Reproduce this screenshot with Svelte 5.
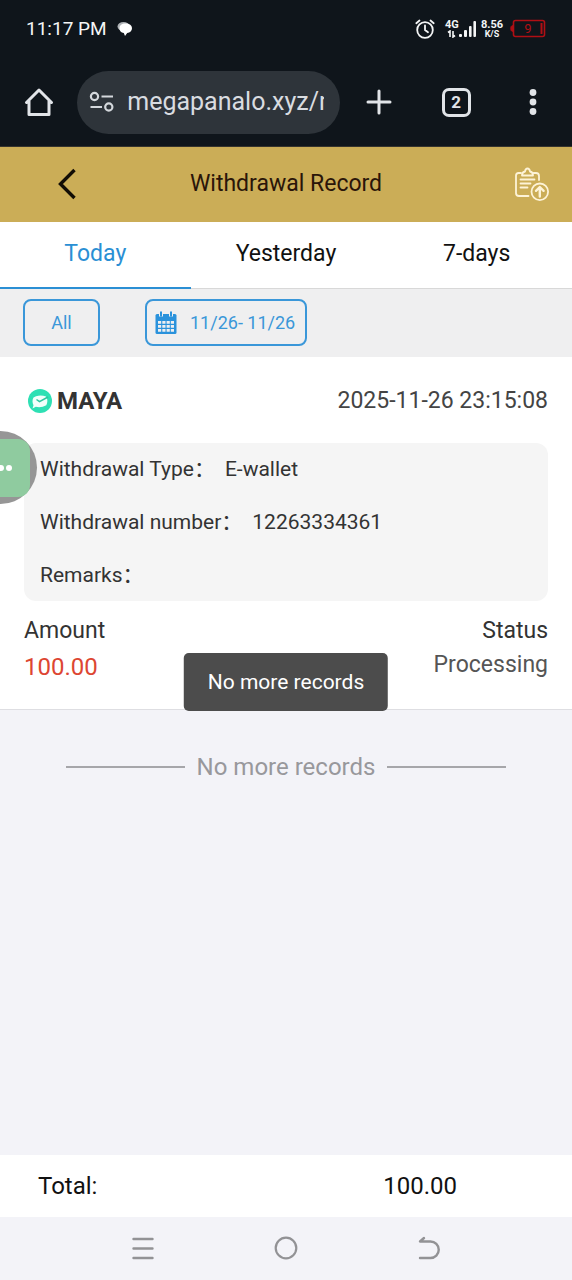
<script lang="ts">
  type Tab = { id: string; label: string };

  const tabs: Tab[] = [
    { id: 'today', label: 'Today' },
    { id: 'yesterday', label: 'Yesterday' },
    { id: 'week', label: '7-days' },
  ];

  const record = {
    wallet: 'MAYA',
    time: '2025-11-26 23:15:08',
    details: [
      { name: 'Withdrawal Type', value: 'E-wallet' },
      { name: 'Withdrawal number', value: '12263334361' },
      { name: 'Remarks', value: '' },
    ],
    amount: '100.00',
    status: 'Processing',
  };

  let active = $state('today');
  let url = $state('megapanalo.xyz/m');
</script>

<div class="phone">
  <div class="status-bar">
    <span class="clock">11:17 PM</span>
    <svg class="chat" width="16" height="16" viewBox="0 0 16 16">
      <ellipse cx="6.5" cy="5.5" rx="6" ry="4.5" fill="#aeb2b6" />
      <path d="M8.500 2.500c4 0 6.500 2 6.500 4.700 0 2.500-1.900 4.300-4.800 4.800L8 15 6.800 12C3.900 11.500 2.500 9.700 2.500 7.200c0-2.700 2.200-4.700 6-4.700z" fill="#fff" />
    </svg>
    <div class="signals">
      <svg width="20" height="20" viewBox="0 0 20 20" fill="none" stroke="#f4f5f6" stroke-width="1.8" stroke-linecap="round">
        <circle cx="10" cy="11" r="7.8" />
        <path d="M10 6.500V11l3 2.300M1.300 4.200l3.200-2.700M18.700 4.200l-3.200-2.700" />
      </svg>
      <div class="network">
        <span class="generation">4G</span>
        <svg width="9" height="8" viewBox="0 0 9 8" fill="none" stroke="#f4f5f6" stroke-width="1.6">
          <path d="M1 2.500L3 1v6M6 1v6l2-1.500" />
        </svg>
      </div>
      <svg class="bars" width="18" height="18" viewBox="0 0 18 18" fill="#f4f5f6">
        <rect x="0" y="14" width="3" height="3" rx="1" />
        <rect x="5" y="10" width="3" height="7" rx="1" />
        <rect x="10" y="6" width="2.6" height="11" rx="1" />
        <rect x="14.4" y="1" width="2.6" height="16" rx="1" />
      </svg>
      <div class="speed">
        <span class="rate">8.56</span>
        <span class="unit">K/S</span>
      </div>
      <svg class="battery" width="36" height="20" viewBox="0 0 36 20">
        <rect x="3.5" y="1.5" width="31" height="16" rx="2" fill="none" stroke="#b00f14" stroke-width="1.6" />
        <path d="M2.500 6.500C1 7 .8 8 .8 9.500s.2 2.500 1.700 3z" fill="#b00f14" stroke="#b00f14" />
        <path d="M31.500 4v11" stroke="#b00f14" stroke-width="2" />
        <text x="18" y="14" text-anchor="middle" font-size="13" fill="#b00f14">9</text>
      </svg>
    </div>
  </div>

  <div class="browser-bar">
    <button class="tool" aria-label="Home">
      <svg width="30" height="32" viewBox="0 0 30 32" fill="none" stroke="#e1e4e8" stroke-width="3" stroke-linejoin="round" stroke-linecap="round">
        <path d="M2.500 16.500L15 4l12.500 12.500M5 15v13.500h20V15" />
      </svg>
    </button>
    <label class="address">
      <svg width="26" height="22" viewBox="0 0 26 22" fill="none" stroke="#d4d8dc" stroke-width="2.2">
        <circle cx="5.5" cy="5.5" r="3.6" />
        <path d="M12.500 5.500H24M1.500 16H13" />
        <circle cx="19.8" cy="16" r="3.6" />
      </svg>
      <input type="text" aria-label="Address" bind:value={url} />
    </label>
    <button class="tool" aria-label="New tab">
      <svg width="26" height="26" viewBox="0 0 26 26" stroke="#e1e4e8" stroke-width="3" stroke-linecap="round">
        <path d="M13 2v22M2 13h22" />
      </svg>
    </button>
    <button class="tool" aria-label="Open tabs">
      <span class="count">2</span>
    </button>
    <button class="tool" aria-label="Menu">
      <svg width="8" height="28" viewBox="0 0 8 28" fill="#e1e4e8">
        <circle cx="4" cy="4.5" r="3.4" />
        <circle cx="4" cy="14" r="3.4" />
        <circle cx="4" cy="23.5" r="3.4" />
      </svg>
    </button>
  </div>

  <div class="site">
    <header>
      <button class="back" aria-label="Back">
        <svg width="20" height="32" viewBox="0 0 20 32" fill="none" stroke="#120d05" stroke-width="3.4">
          <path d="M17.500 2L3.500 16l14 14" />
        </svg>
      </button>
      <h1>Withdrawal Record</h1>
      <button class="submit" aria-label="Submit record">
        <svg width="36" height="36" viewBox="0 0 36 36" fill="none" stroke="#fdf3d7" stroke-width="1.8" stroke-linecap="round" stroke-linejoin="round">
          <path d="M7 7H4.500Q2 7 2 9.500V27q0 3 3 3h9.500M19.500 7H22q3 0 3 3v4" />
          <path d="M8 9.500Q8 6 11 5.500 11.500 2.500 13.500 2.500T16 5.500q3 .5 3 4z" />
          <path d="M6.500 13.500h14M6.500 17.500h10M6.500 21.500h7" />
          <circle cx="25.8" cy="25.8" r="8.3" />
          <path d="M25.800 30.500v-9M22 24.800l3.800-3.800 3.800 3.800" stroke-width="2.4" />
        </svg>
      </button>
    </header>

    <nav class="tabs">
      {#each tabs as tab (tab.id)}
        <button class:active={active === tab.id} onclick={() => (active = tab.id)}>
          {tab.label}
        </button>
      {/each}
    </nav>

    <div class="filters">
      <button class="filter all">All</button>
      <button class="filter date">
        <svg width="22" height="24" viewBox="0 0 22 24">
          <path d="M.5 4.500Q.5 3 2 3h18q1.500 0 1.500 1.500v17q0 1.500-1.500 1.500H2Q.5 23 .5 21.500z" fill="#2a92dc" />
          <path d="M3 10h3.200v2.800H3zm4.300 0h3.200v2.800H7.300zm4.300 0h3.200v2.800h-3.200zm4.200 0H19v2.800h-3.200zM3 14h3.200v2.800H3zm4.300 0h3.200v2.800H7.300zm4.300 0h3.200v2.800h-3.200zm4.200 0H19v2.800h-3.200zM3 18h3.200v2.800H3zm4.300 0h3.200v2.800H7.300zm4.300 0h3.200v2.800h-3.200zm4.200 0H19v2.800h-3.200z" fill="#efeff0" />
          <path d="M6 1v4.500M16 1v4.500" stroke="#efeff0" stroke-width="4" />
          <path d="M6 .5v5M16 .5v5" stroke="#2a92dc" stroke-width="2" />
        </svg>
        <span>11/26- 11/26</span>
      </button>
    </div>

    <article>
      <div class="row heading">
        <div class="wallet">
          <svg width="26" height="26" viewBox="0 0 26 26">
            <circle cx="13" cy="13" r="12" fill="#2ee0b4" />
            <path d="M9 8.200Q14 6.500 19 8.500q2.500 4 .3 8.800-5 2.700-10.500 1.500L5.500 20.500l1-3.200Q4.500 13 6.500 9.500z" fill="#f2fffb" />
            <path d="M9.500 11.500l3 2.200 8.500-4.700" fill="none" stroke="#2cc79f" stroke-width="1.5" />
          </svg>
          <strong>{record.wallet}</strong>
        </div>
        <time>{record.time}</time>
      </div>

      <dl>
        {#each record.details as detail (detail.name)}
          <div>
            <dt>{detail.name}：</dt>
            <dd>{detail.value}</dd>
          </div>
        {/each}
      </dl>

      <div class="row summary">
        <div class="amount">
          <span>Amount</span>
          <b>{record.amount}</b>
        </div>
        <div class="status">
          <span>Status</span>
          <span class="state">{record.status}</span>
        </div>
      </div>
    </article>

    <p class="end">No more records</p>

    <footer>
      <span>Total:</span>
      <span>100.00</span>
    </footer>

    <div class="toast" role="status">No more records</div>
  </div>

  <div class="system-nav">
    <button aria-label="Recent apps">
      <svg width="26" height="26" viewBox="0 0 26 26" stroke="#929295" stroke-width="2.4" stroke-linecap="round">
        <path d="M3.500 4h19M3.500 13.500h19M3.500 23h19" />
      </svg>
    </button>
    <button aria-label="Home screen">
      <svg width="26" height="26" viewBox="0 0 26 26" fill="none" stroke="#929295" stroke-width="2.2">
        <circle cx="13" cy="13" r="10.3" />
      </svg>
    </button>
    <button aria-label="Go back">
      <svg width="26" height="26" viewBox="0 0 26 26" fill="none" stroke="#929295" stroke-width="2.4" stroke-linecap="round" stroke-linejoin="round">
        <path d="M8 3L4 6.500h10.500a8 8 0 0 1 0 16.500H4" />
      </svg>
    </button>
  </div>

  <button class="floating" aria-label="Assistant">
    <span class="pad">
      <i></i><i></i>
    </span>
  </button>
</div>

<style>
  :global(body) {
    background: #f3f3f8;
  }

  .phone {
    position: relative;
    display: flex;
    flex-direction: column;
    min-height: 100vh;
    overflow: hidden;
    font-family: Roboto, "Noto Sans CJK SC", sans-serif;
    font-size: 23px;
    line-height: 28px;
    color: #333;
  }

  button {
    margin: 0;
    padding: 0;
    border: none;
    background: none;
    color: inherit;
    font: inherit;
    cursor: pointer;
  }

  svg {
    display: block;
    flex: none;
  }

  .status-bar {
    display: flex;
    align-items: center;
    gap: 10px;
    height: 58px;
    padding: 0 26px;
    background: #0f151b;
    color: #f4f5f6;
    font-size: 19px;
  }

  .signals {
    display: flex;
    align-items: center;
    margin-left: auto;
  }

  .network,
  .speed {
    display: flex;
    flex-direction: column;
    align-items: center;
    font-weight: 700;
  }

  .network {
    margin-left: 10px;
  }

  .generation {
    font-size: 11px;
    line-height: 10px;
  }

  .speed {
    margin: 0 7px 0 4px;
  }

  .rate {
    font-size: 11px;
    line-height: 10px;
  }

  .unit {
    font-size: 9px;
    line-height: 9px;
  }

  .browser-bar {
    display: flex;
    align-items: center;
    height: 88px;
    border-bottom: 1px solid #35332d;
    background: #0f151b;
    color: #e1e4e8;
  }

  .tool {
    display: flex;
    flex: 1;
    align-items: center;
    justify-content: center;
    height: 64px;
  }

  .address {
    display: flex;
    flex: 0 0 46%;
    align-items: center;
    gap: 12px;
    box-sizing: border-box;
    min-width: 0;
    height: 63px;
    padding: 0 16px 0 12px;
    border-radius: 32px;
    background: #2e343a;
  }

  .address input {
    flex: 1;
    min-width: 0;
    padding: 0;
    border: none;
    outline: none;
    background: none;
    color: #d9dce0;
    font: inherit;
    font-size: 25px;
  }

  .count {
    box-sizing: border-box;
    width: 29px;
    height: 29px;
    border: 3px solid #e1e4e8;
    border-radius: 7px;
    font-size: 17px;
    font-weight: 700;
    line-height: 23px;
  }

  .site {
    position: relative;
    display: flex;
    flex: 1;
    flex-direction: column;
  }

  header {
    display: grid;
    grid-template-columns: 1fr auto 1fr;
    align-items: center;
    box-sizing: border-box;
    height: 75px;
    padding: 0 22px 2px;
    background: #cbad57;
  }

  h1 {
    margin: 0;
    color: #2a1509;
    font-size: 23px;
    font-weight: 400;
  }

  .back {
    justify-self: start;
    padding-left: 35px;
  }

  .submit {
    justify-self: end;
  }

  .tabs {
    display: flex;
    height: 67px;
    background: #fff;
    color: #111;
  }

  .tabs button {
    flex: 1;
    padding-bottom: 3px;
    border-bottom: 1px solid #d8d8d8;
  }

  .tabs .active {
    padding-bottom: 2px;
    border-bottom: 2px solid #2a8fd4;
    color: #2a8fd4;
  }

  .filters {
    display: flex;
    gap: 45px;
    padding: 10px 23px 11px;
    background: #efeff0;
  }

  .filter {
    display: flex;
    align-items: center;
    justify-content: center;
    box-sizing: border-box;
    height: 47px;
    border: 2px solid #3a97d9;
    border-radius: 8px;
    color: #3a97d9;
    font-size: 18px;
  }

  .all {
    width: 77px;
  }

  .date {
    gap: 13px;
    padding: 0 10px 0 8px;
  }

  article {
    padding: 30px 24px 28px;
    border-bottom: 1px solid #dedee2;
    background: #fff;
  }

  .row {
    display: flex;
    justify-content: space-between;
  }

  .heading {
    align-items: center;
  }

  .wallet {
    display: flex;
    align-items: center;
    gap: 4px;
    padding-left: 3px;
    font-size: 24px;
  }

  time {
    color: #444;
  }

  dl {
    display: grid;
    gap: 25px;
    margin: 28px 0 16px;
    padding: 12px 16px;
    border-radius: 12px;
    background: #f5f5f5;
    font-size: 21px;
  }

  dl div {
    display: flex;
    gap: 10px;
    height: 28px;
  }

  dd {
    margin: 0;
  }

  .amount,
  .status {
    display: flex;
    flex-direction: column;
    gap: 6px;
  }

  .amount {
    gap: 8px;
  }

  .amount b {
    color: #dd4632;
    font-size: 24px;
    font-weight: 400;
  }

  .status {
    align-items: flex-end;
  }

  .state {
    color: #555;
  }

  .end {
    display: flex;
    align-items: center;
    gap: 12px;
    margin: 43px 66px auto;
    color: #98989c;
    font-size: 24px;
  }

  .end::before,
  .end::after {
    flex: 1;
    height: 2px;
    background: #a6a6aa;
    content: "";
  }

  footer {
    display: grid;
    grid-template-columns: 2fr 1fr;
    align-items: center;
    height: 62px;
    padding: 0 16px 0 38px;
    background: #fff;
    color: #111;
    font-size: 24px;
  }

  .toast {
    position: absolute;
    top: 50%;
    left: 50%;
    padding: 15px 24px;
    border-radius: 5px;
    background: #4c4c4c;
    color: #fff;
    font-size: 21px;
    white-space: nowrap;
    transform: translate(-50%, -50%);
  }

  .system-nav {
    display: flex;
    justify-content: space-between;
    padding: 18px 130px 19px;
    background: #f3f3f8;
  }

  .floating {
    position: absolute;
    top: 431px;
    left: -36px;
    display: flex;
    align-items: center;
    justify-content: center;
    width: 73px;
    height: 73px;
    border-radius: 50%;
    background: #969696;
  }

  .pad {
    display: flex;
    align-items: center;
    justify-content: flex-end;
    gap: 2px;
    box-sizing: border-box;
    width: 58px;
    height: 58px;
    padding-right: 18px;
    border-radius: 12px;
    background: #8fcb9f;
  }

  .pad i {
    width: 6px;
    height: 6px;
    border-radius: 50%;
    background: #fff;
  }
</style>
